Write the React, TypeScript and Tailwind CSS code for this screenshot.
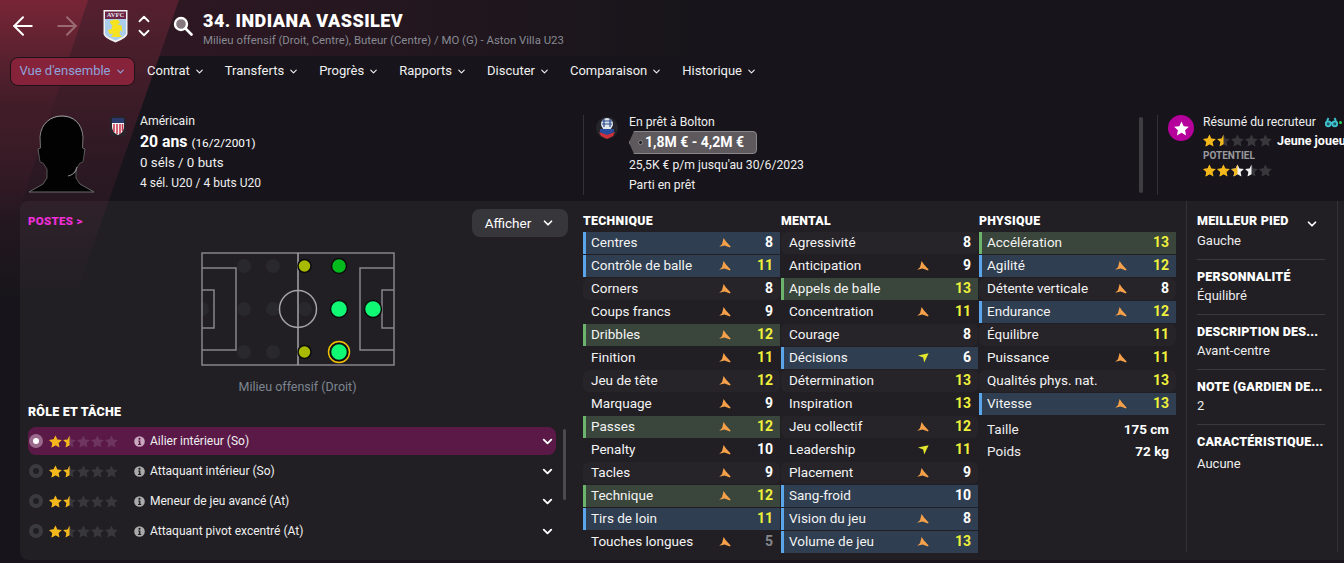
import { ChevronDown, ChevronUp, ArrowLeft, ArrowRight } from "lucide-react"

type Attr = { name: string; val: number; arrow?: "up" | "down"; hl?: "blue" | "green" }

const technique: Attr[] = [
  { name: "Centres", val: 8, arrow: "up", hl: "blue" },
  { name: "Contrôle de balle", val: 11, arrow: "up", hl: "blue" },
  { name: "Corners", val: 8, arrow: "up" },
  { name: "Coups francs", val: 9, arrow: "up" },
  { name: "Dribbles", val: 12, arrow: "up", hl: "green" },
  { name: "Finition", val: 11, arrow: "up" },
  { name: "Jeu de tête", val: 12, arrow: "up" },
  { name: "Marquage", val: 9, arrow: "up" },
  { name: "Passes", val: 12, arrow: "up", hl: "green" },
  { name: "Penalty", val: 10, arrow: "up" },
  { name: "Tacles", val: 9, arrow: "up" },
  { name: "Technique", val: 12, arrow: "up", hl: "green" },
  { name: "Tirs de loin", val: 11, hl: "blue" },
  { name: "Touches longues", val: 5, arrow: "up" },
]

const mental: Attr[] = [
  { name: "Agressivité", val: 8 },
  { name: "Anticipation", val: 9, arrow: "up" },
  { name: "Appels de balle", val: 13, hl: "green" },
  { name: "Concentration", val: 11, arrow: "up" },
  { name: "Courage", val: 8 },
  { name: "Décisions", val: 6, arrow: "down", hl: "blue" },
  { name: "Détermination", val: 13 },
  { name: "Inspiration", val: 13 },
  { name: "Jeu collectif", val: 12, arrow: "up" },
  { name: "Leadership", val: 11, arrow: "down" },
  { name: "Placement", val: 9, arrow: "up" },
  { name: "Sang-froid", val: 10, hl: "blue" },
  { name: "Vision du jeu", val: 8, arrow: "up", hl: "blue" },
  { name: "Volume de jeu", val: 13, arrow: "up", hl: "blue" },
]

const physique: Attr[] = [
  { name: "Accélération", val: 13, hl: "green" },
  { name: "Agilité", val: 12, arrow: "up", hl: "blue" },
  { name: "Détente verticale", val: 8, arrow: "up" },
  { name: "Endurance", val: 12, arrow: "up", hl: "blue" },
  { name: "Équilibre", val: 11 },
  { name: "Puissance", val: 11, arrow: "up" },
  { name: "Qualités phys. nat.", val: 13 },
  { name: "Vitesse", val: 13, arrow: "up", hl: "blue" },
]

const navItems = ["Contrat", "Transferts", "Progrès", "Rapports", "Discuter", "Comparaison", "Historique"]

const roles = ["Ailier intérieur (So)", "Attaquant intérieur (So)", "Meneur de jeu avancé (At)", "Attaquant pivot excentré (At)"]

const sideInfo = [
  { label: "PERSONNALITÉ", value: "Équilibré" },
  { label: "DESCRIPTION DES...", value: "Avant-centre" },
  { label: "NOTE (GARDIEN DE...", value: "2" },
]

const STAR = "M6.5 0.4 L8.4 4.5 L12.9 5 L9.6 8 L10.5 12.5 L6.5 10.2 L2.5 12.5 L3.4 8 L0.1 5 L4.6 4.5 Z"

const Star = ({ left, right }: { left: string; right: string }) => (
  <svg width="13" height="13" viewBox="0 0 13 13" className="shrink-0">
    <path d={STAR} fill={right} />
    <path d={STAR} fill={left} style={{ clipPath: "inset(0 50% 0 0)" }} />
  </svg>
)

const Stars = ({ colors }: { colors: [string, string][] }) => (
  <div className="flex gap-px">
    {colors.map((c, i) => (
      <Star key={i} left={c[0]} right={c[1]} />
    ))}
  </div>
)

const G = "#f4b81c"
const W = "#f2f2f2"
const E = "#38373c"
const lowStars = (empty: string): [string, string][] => [[G, G], [G, empty], [empty, empty], [empty, empty], [empty, empty]]

const Arrow = ({ dir }: { dir: "up" | "down" }) =>
  dir === "up" ? (
    <svg width="12" height="10" viewBox="0 0 12 10">
      <path d="M4.6 0 L7 3.6 L11.6 8.4 L11 9.4 L5.6 7.4 L0.2 8.8 L3 6.2 Z" fill="#f6a04a" />
    </svg>
  ) : (
    <svg width="11" height="10" viewBox="0 0 11 10">
      <path d="M0 2.4 L10.6 0.2 L6.2 9.6 L5.2 4.6 Z" fill="#e4e82c" />
    </svg>
  )

const valueColor = (v: number) => (v >= 11 ? "text-[#eef03c]" : v <= 5 ? "text-[#85858a]" : "text-white")

const AttrRow = ({ attr, index }: { attr: Attr; index: number }) => {
  let bg = index % 2 === 0 ? "bg-white/[0.025] rounded-md pl-2" : "pl-2"
  if (attr.hl === "blue") bg = "bg-[#2f3e50] border-l-[3px] border-[#5ba6ea] pl-[5px]"
  if (attr.hl === "green") bg = "bg-[#3a463b] border-l-[3px] border-[#6cb46e] pl-[5px]"
  return (
    <div className={`flex items-center h-[22px] mb-px pb-px pr-[7px] text-[13.5px] text-[#f4f4f4] ${bg}`}>
      <span className="flex-1 whitespace-nowrap">{attr.name}</span>
      <span className="w-[12px] flex justify-center">{attr.arrow && <Arrow dir={attr.arrow} />}</span>
      <span className={`w-[42px] text-right text-[14px] font-bold ${valueColor(attr.val)}`}>{attr.val}</span>
    </div>
  )
}

const AttrColumn = ({ title, rows, children }: { title: string; rows: Attr[]; children?: React.ReactNode }) => (
  <div className="w-[197px] shrink-0">
    <h3 className="h-[31px] pt-[13px] text-[12.3px] leading-[14px] font-black tracking-[0.3px] text-white">{title}</h3>
    {rows.map((r, i) => (
      <AttrRow key={r.name} attr={r} index={i} />
    ))}
    {children}
  </div>
)

const Pitch = () => {
  const line = "#87858a"
  return (
    <svg width="195" height="114" viewBox="0 0 195 114">
      {[[43, 14], [72, 14], [43, 100], [72, 100], [1, 57], [43, 57], [72, 57], [104, 57]].map(([x, y], i) => (
        <circle key={i} cx={x} cy={y} r="7" fill="#29282c" />
      ))}
      <g fill="none" stroke={line} strokeWidth="1.5">
        <rect x="1" y="1" width="192" height="112" />
        <path d="M1 16 H35 V98 H1 M1 38 H13 V76 H1 M193 16 H159 V98 H193 M193 38 H181 V76 H193" />
        <circle cx="97" cy="57" r="18.5" stroke="#a5a4a8" />
        <path d="M97 1 V113" stroke="#a5a4a8" />
      </g>
      <circle cx="103.5" cy="14" r="6.5" fill="#a8ba00" stroke="#0c0c0c" strokeWidth="1.5" />
      <circle cx="103.5" cy="100" r="6.5" fill="#a8ba00" stroke="#0c0c0c" strokeWidth="1.5" />
      <circle cx="138" cy="14" r="7.5" fill="#04bb1e" stroke="#0c0c0c" strokeWidth="1.5" />
      <circle cx="138" cy="57" r="8.5" fill="#10f975" stroke="#0c0c0c" strokeWidth="1.5" />
      <circle cx="172" cy="57" r="8.5" fill="#10f975" stroke="#0c0c0c" strokeWidth="1.5" />
      <circle cx="138" cy="100" r="8.5" fill="#10f975" stroke="#0c0c0c" strokeWidth="1.5" />
      <circle cx="138" cy="100" r="10.5" fill="none" stroke="#f2c200" strokeWidth="1.4" />
    </svg>
  )
}

const ClubShield = () => (
  <svg width="25" height="34" viewBox="0 0 25 34">
    <path d="M0.5 1 H24.5 V25 Q24 29 12.5 33.5 Q1 29 0.5 25 Z" fill="#f2f2f2" />
    <path d="M2 2.5 H23 V10 H2 Z" fill="#6c2546" />
    <path d="M2 10 H23 V24.5 Q22.5 27.5 12.5 31.5 Q2.5 27.5 2 24.5 Z" fill="#a9cdea" />
    <path d="M7 12 L12 10.5 L15.5 11 L17 13.5 L14.5 15.5 L18.5 16.5 L19.5 23 L17 21 L16.5 25 L19 28 H8 L10.5 24.5 L6.5 25 L5 21 L8.5 20 L9.5 16 L7.5 15 Z" fill="#f6e21e" />
    <text x="12.5" y="8.4" textAnchor="middle" fontSize="6.6" fontWeight="700" fill="#e6e0ea" fontFamily="Liberation Serif, serif">AVFC</text>
  </svg>
)

const SearchIcon = () => (
  <svg width="20" height="20" viewBox="0 0 20 20" className="shrink-0">
    <circle cx="8" cy="8" r="6" fill="#85797f" stroke="#fff" strokeWidth="2.4" />
    <path d="M12.5 12.5 L18.5 18.5" stroke="#fff" strokeWidth="2.6" strokeLinecap="round" />
  </svg>
)

const InfoDot = ({ fill, dark }: { fill: string; dark: string }) => (
  <svg width="11" height="11" viewBox="0 0 11 11" className="shrink-0">
    <circle cx="5.5" cy="5.5" r="5.3" fill={fill} />
    <circle cx="5.5" cy="2.8" r="1.1" fill={dark} />
    <path d="M4.2 4.6 H6.4 V8 H7.2 V9 H4 V8 H4.9 V5.5 H4.2 Z" fill={dark} />
  </svg>
)

const Silhouette = () => {
  const head = "M0 77 L14 69 L18 63 L18 54 L14 48 L11 47 L9 34 L11.5 33 L11 22 C12 8 22 1 33 1 C44 1 53 8 54 22 L53.5 33 L56 34 L54 47 L51 48 L47 54 L47 63 L51 69 L65 77 Z"
  return (
    <svg width="66" height="78" viewBox="0 0 66 78">
      <defs>
        <linearGradient id="rim" x1="0" y1="0" x2="0" y2="1">
          <stop offset="0" stopColor="#a8a8a8" />
          <stop offset="0.6" stopColor="#4a4a4a" />
          <stop offset="1" stopColor="#6a6a6a" />
        </linearGradient>
      </defs>
      <path d={head} fill="#020202" stroke="url(#rim)" strokeWidth="1" />
      <path d="M39 61 C44 60 47 57 48 52" fill="none" stroke="#8a8a8a" strokeWidth="1.2" />
    </svg>
  )
}

const UsaBadge = () => (
  <svg width="16" height="20" viewBox="0 0 16 20">
    <rect x="0" y="0" width="16" height="20" rx="4" fill="#26252b" />
    <path d="M2 2 H14 V11 Q14 16 8 19 Q2 16 2 11 Z" fill="#f3f3f3" />
    <path d="M2 2 H14 V7 H2 Z" fill="#2b3a6b" />
    <path d="M4 8 V16 M7 8 V18 M10 8 V18 M12.5 8 V15" stroke="#c8324a" strokeWidth="1.5" />
  </svg>
)

const BoltonBadge = () => (
  <svg width="22" height="26" viewBox="0 0 22 26">
    <circle cx="11" cy="12" r="11" fill="#25242a" />
    <circle cx="11" cy="8" r="6" fill="#dfe6ee" />
    <path d="M6 5 H16 M6 8 H16 M8 3 V11 M14 3 V11" stroke="#2a4a8c" strokeWidth="1.2" />
    <path d="M4 13 H18 V16 L11 21 L4 16 Z" fill="#2a4a9c" />
    <path d="M3 16 L11 19 L19 16 L17 20 L11 23 L5 20 Z" fill="#d0303a" />
  </svg>
)

const Binoculars = () => (
  <svg width="13" height="11" viewBox="0 0 13 11" fill="#1d5a66" stroke="#3fc4cf" strokeWidth="1.8">
    <circle cx="3.2" cy="6.8" r="2.5" />
    <circle cx="9.8" cy="6.8" r="2.5" />
    <path d="M2 4 L3.5 1 M11 4 L9.5 1 M5.5 6 H7.5" />
  </svg>
)

const PriceTag = () => (
  <div className="h-[23px] w-[128px] flex items-center bg-[#5d595d] border border-[#8a878a] pl-[8px] text-[14px] font-bold text-white [clip-path:polygon(5px_0,100%_0,100%_100%,5px_100%,0_50%)] rounded-r-[4px]">
    <span className="w-[5px] h-[5px] rounded-full bg-[#1d1c20] border border-[#888] shrink-0" />
    <span className="ml-[2px] whitespace-nowrap">1,8M € - 4,2M €</span>
  </div>
)

export default function App() {
  return (
    <div className="relative h-[563px] w-[1344px] overflow-hidden bg-[#17151b] text-[#eee] font-['Roboto',sans-serif]">
      {/* diagonal club colour bands behind the header */}
      <div className="absolute left-0 top-0 w-[700px] h-[56px] bg-gradient-to-r from-[#341824] to-transparent" />
      <div className="absolute left-0 top-0 w-[180px] h-[300px] bg-gradient-to-b from-[#56202f] via-[#2f1923] to-transparent [clip-path:polygon(0_0,179px_0,75px_297px,0_297px)]" />
      <div className="absolute left-0 top-0 w-[90px] h-[220px] bg-gradient-to-b from-[#782536] via-[#3f1c28] to-transparent [clip-path:polygon(0_0,88px_0,16px_220px,0_220px)]" />

      <div className="relative">
        {/* title row */}
        <div className="flex items-start h-[56px]">
          <div className="flex items-center w-[89px] pl-[8px] pt-[11px] gap-[14px]">
            <ArrowLeft size={30} strokeWidth={1.6} className="text-white shrink-0" />
            <ArrowRight size={30} strokeWidth={1.6} className="text-[#9a6a72] shrink-0" />
          </div>
          <div className="mt-[9px] ml-[14px]"><ClubShield /></div>
          <div className="flex flex-col mt-[10px] ml-[7px]">
            <ChevronUp size={18} strokeWidth={2.4} className="text-white -mb-[4px]" />
            <ChevronDown size={18} strokeWidth={2.4} className="text-white" />
          </div>
          <div className="mt-[16px] ml-[20px]"><SearchIcon /></div>
          <div className="ml-[10px] pt-[10px]">
            <h1 className="text-[18px] leading-[21px] font-black text-white tracking-[0.45px] whitespace-nowrap">34. INDIANA VASSILEV</h1>
            <p className="text-[11.4px] leading-[14px] mt-[2px] text-[#878a92] whitespace-nowrap">Milieu offensif (Droit, Centre), Buteur (Centre) / MO (G) - Aston Villa U23</p>
          </div>
        </div>

        {/* menu row */}
        <nav className="flex items-center h-[30px] ml-[10px] text-[13px] whitespace-nowrap">
          <div className="flex items-center justify-center h-[29px] w-[125px] rounded-lg bg-[#86233a] border border-[#1c1318] text-[#8ea3dc]">
            Vue d'ensemble
            <ChevronDown size={11} strokeWidth={2.5} className="ml-[4px]" />
          </div>
          <div className="flex ml-[12px] gap-[20px] text-[#f0f0f0]">
            {navItems.map((n) => (
              <span key={n} className="flex items-center">
                {n}
                <ChevronDown size={11} strokeWidth={2.5} className="ml-[4px]" />
              </span>
            ))}
          </div>
        </nav>

        {/* player summary */}
        <div className="flex h-[85px] mt-[26px] text-[12.2px] leading-[15px] text-[#eee]">
          <div className="ml-[29px] mt-[3px] w-[66px] shrink-0"><Silhouette /></div>
          <div className="ml-[15px] mt-[4px] shrink-0"><UsaBadge /></div>
          <div className="ml-[14px] w-[443px] shrink-0">
            <p className="h-[20px] pt-[2px]">Américain</p>
            <p className="h-[21px] text-[15.8px] leading-[20px] font-bold text-white">20 ans <span className="text-[11.8px] font-normal">(16/2/2001)</span></p>
            <p className="h-[20px] text-[13.3px] leading-[20px]">0 séls / 0 buts</p>
            <p className="h-[20px] leading-[20px] text-[12px]">4 sél. U20 / 4 buts U20</p>
          </div>
          <div className="flex border-l border-[#323136] w-[556px] h-[80px] mt-[3px] shrink-0">
            <div className="ml-[12px] mt-[1px]"><BoltonBadge /></div>
            <div className="ml-[11px]">
              <p className="h-[15px]">En prêt à Bolton</p>
              <div className="mt-[1px]"><PriceTag /></div>
              <p className="mt-[4px] h-[15px]">25,5K € p/m jusqu'au 30/6/2023</p>
              <p className="mt-[5px] h-[15px]">Parti en prêt</p>
            </div>
          </div>
          <div className="w-[4px] h-[76px] mt-[5px] rounded-full bg-[#3e3d42] shrink-0" />
          <div className="flex ml-[14px] border-l border-[#323136] h-[80px] mt-[3px] shrink-0 w-[190px]">
            <div className="ml-[10px] w-[26px] h-[26px] rounded-full bg-[#b5009b] flex items-center justify-center shrink-0">
              <svg width="15" height="15" viewBox="0 0 13 13"><path d={STAR} fill="#fff" /></svg>
            </div>
            <div className="ml-[9px] whitespace-nowrap">
              <div className="flex items-center h-[15px]">
                <span>Résumé du recruteur</span>
                <span className="ml-[9px] flex items-center gap-px">
                  <Binoculars />
                  <span className="w-[3px] h-[3px] rounded-full bg-[#2fd35a]" />
                </span>
              </div>
              <div className="flex items-center h-[16px] mt-[2px]">
                <Stars colors={lowStars(E)} />
                <span className="ml-[5px] text-[12.5px] font-bold text-white">Jeune joueur</span>
              </div>
              <p className="text-[10px] leading-[12px] mt-[2px] font-bold text-[#9a9a9f]">POTENTIEL</p>
              <div className="mt-[2px]">
                <Stars colors={[[G, G], [G, G], [G, W], [W, E], [E, E]]} />
              </div>
            </div>
          </div>
        </div>

        {/* main panel */}
        <div className="flex h-[359px] mt-[4px] ml-[20px] pl-[8px] rounded-tl-lg rounded-bl-lg bg-white/[0.045]">
          {/* left column */}
          <div className="w-[535px] shrink-0 flex flex-col">
            <div className="flex justify-between items-start h-[51px] pt-[8px] -mr-[5px]">
              <span className="mt-[5px] text-[11.5px] leading-[14px] font-black tracking-[0.3px] text-[#ee2fd8]">POSTES &gt;</span>
              <div className="flex items-center justify-center gap-[10px] h-[28px] w-[96px] rounded-lg bg-[#37363b] text-[13.5px] text-white">
                Afficher
                <ChevronDown size={14} strokeWidth={3} />
              </div>
            </div>
            <div className="flex justify-center pl-[6px]"><Pitch /></div>
            <p className="text-center text-[12.5px] leading-[16px] mt-[13px] pl-[4px] text-[#7d8590]">Milieu offensif (Droit)</p>
            <h3 className="text-[12.5px] leading-[14px] font-black tracking-[0.2px] text-white mt-[10px]">RÔLE ET TÂCHE</h3>
            <div className="flex mt-[8px] gap-[7px]">
              <div className="w-[528px] shrink-0">
                {roles.map((r, i) => (
                  <div key={r} className={`flex items-center h-[28px] mb-[2px] pr-[1px] text-[12px] text-[#f0f0f0] rounded-lg ${i === 0 ? "bg-[#5a1947]" : ""}`}>
                    <span className={`ml-[1px] w-[14px] h-[14px] rounded-full flex items-center justify-center shrink-0 ${i === 0 ? "bg-[#9a6a8c]" : "bg-[#3b3a3f]"}`}>
                      <span className={`w-[6px] h-[6px] rounded-full ${i === 0 ? "bg-white" : "bg-[#201f24]"}`} />
                    </span>
                    <span className="ml-[6px]"><Stars colors={lowStars(i === 0 ? "#6d3560" : E)} /></span>
                    <span className="ml-[16px]"><InfoDot fill={i === 0 ? "#c9a8c0" : "#aaa"} dark={i === 0 ? "#5a1947" : "#201f24"} /></span>
                    <span className="ml-[5px] flex-1">{r}</span>
                    <ChevronDown size={15} strokeWidth={3} className="text-white" />
                  </div>
                ))}
              </div>
              <div className="w-[3px] h-[71px] mt-[2px] rounded-full bg-[#4b4a4f] shrink-0" />
            </div>
          </div>

          {/* attribute columns */}
          <div className="flex gap-px ml-[20px] h-[359px]">
            <AttrColumn title="TECHNIQUE" rows={technique} />
            <AttrColumn title="MENTAL" rows={mental} />
            <AttrColumn title="PHYSIQUE" rows={physique}>
              <div className="flex justify-between h-[23px] pb-px items-center mt-[3px] pl-2 pr-[7px] text-[13.5px]">
                <span>Taille</span>
                <span className="font-bold text-white">175 cm</span>
              </div>
              <div className="flex justify-between h-[22px] pb-px items-center pl-2 pr-[7px] text-[13.5px]">
                <span>Poids</span>
                <span className="font-bold text-white">72 kg</span>
              </div>
            </AttrColumn>
          </div>

          {/* side facts */}
          <div className="ml-[10px] h-[351px] w-[152px] shrink-0 border-x border-[#323136] pl-[10px] pr-[12px] text-[13px] text-[#eee]">
            <div className="h-[59px] pt-[10px] border-b border-[#3a393e]">
              <div className="flex items-center justify-between pr-[6px] text-[12.5px] leading-[14px] font-black tracking-[0.2px] text-white whitespace-nowrap">
                MEILLEUR PIED
                <ChevronDown size={14} strokeWidth={3} className="mt-[6px]" />
              </div>
              <p className="leading-[16px] mt-[2px]">Gauche</p>
            </div>
            {sideInfo.map((s) => (
              <div key={s.label} className="h-[55px] pt-[10px] border-b border-[#3a393e]">
                <p className="text-[12.5px] leading-[14px] font-black tracking-[0.2px] text-white whitespace-nowrap">{s.label}</p>
                <p className="leading-[16px] mt-[4px]">{s.value}</p>
              </div>
            ))}
            <div className="pt-[10px]">
              <p className="text-[12.5px] leading-[14px] font-black tracking-[0.2px] text-white whitespace-nowrap">CARACTÉRISTIQUE...</p>
              <p className="leading-[16px] mt-[7px]">Aucune</p>
            </div>
          </div>
        </div>
      </div>
    </div>
  )
}
